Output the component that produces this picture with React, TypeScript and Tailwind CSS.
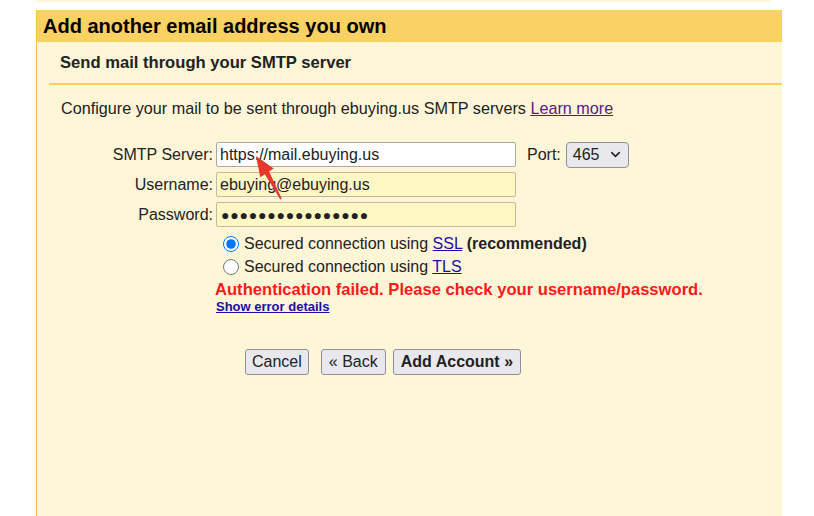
import { ChevronDown } from "lucide-react";

const FieldRow = ({
  label,
  children,
}: {
  label: string;
  children: React.ReactNode;
}) => (
  <div className="flex items-center h-[25px]">
    <label className="w-[179px] pr-[3px] text-right text-[16px] text-[#222]">
      {label}
    </label>
    {children}
  </div>
);

const App = () => {
  return (
    <div className="relative w-[814px] h-[516px] overflow-hidden bg-white font-['Liberation_Sans',Arial,sans-serif] text-[#222]">
      <div className="ml-[36px] w-[735px] h-[2px] bg-[#fff6d8]" />

      <div className="ml-[36px] mt-[8px] w-[746px] h-[506px] flex flex-col bg-[#fff6d8] border-l border-[#f6c347]">
        <div className="h-[32px] flex items-center pl-[6px] bg-[#fad163] text-[20px] font-bold text-black">
          Add another email address you own
        </div>

        <div className="ml-[12px] h-[43px] flex items-center pl-[11px] pt-[1px] border-b-2 border-[#f9cf5f] text-[16.6px] font-bold">
          Send mail through your SMTP server
        </div>

        <p className="mt-[14px] pl-[24px] text-[16.2px] leading-[18px]">
          Configure your mail to be sent through ebuying.us SMTP servers{" "}
          <a className="text-[#551a8b] underline">Learn more</a>
        </p>

        <div className="mt-[25px] flex flex-col gap-[5px]">
          <FieldRow label="SMTP Server:">
            <input
              defaultValue="https://mail.ebuying.us"
              className="w-[300px] h-[25px] px-[3px] bg-white border border-[#a9a9a9] rounded-[2px] text-[16px] text-[#222] outline-none"
            />
            <span className="ml-[11px] text-[16px]">Port:</span>
            <div className="ml-[5px] h-[26px] w-[63px] flex items-center justify-between pl-[6px] pr-[5px] bg-[#e9e9ed] border border-[#8f8f9d] rounded-[4px] text-[16px]">
              465
              <ChevronDown className="w-[15px] h-[15px]" strokeWidth={2.5} />
            </div>
          </FieldRow>
          <FieldRow label="Username:">
            <input
              defaultValue="ebuying@ebuying.us"
              className="w-[300px] h-[25px] px-[3px] bg-[#fff7c4] border border-[#c6b99b] rounded-[2px] text-[16px] text-[#222] outline-none"
            />
          </FieldRow>
          <FieldRow label="Password:">
            <input
              defaultValue="●●●●●●●●●●●●●●●●"
              className="w-[300px] h-[25px] px-[4px] bg-[#fff7c4] border border-[#c6b99b] rounded-[2px] text-[14px] tracking-[0.8px] text-[#222] outline-none"
            />
          </FieldRow>
        </div>

        <div className="mt-[5px] ml-[186px] flex flex-col text-[16px]">
          <label className="h-[23px] flex items-center gap-[5px]">
            <input
              type="radio"
              name="sec"
              defaultChecked
              className="m-0 w-[16px] h-[16px] accent-[#0075ff]"
            />
            <span>
              Secured connection using{" "}
              <a className="text-[#1a0dab] underline">SSL</a>{" "}
              <b>(recommended)</b>
            </span>
          </label>
          <label className="h-[23px] flex items-center gap-[5px]">
            <input type="radio" name="sec" className="m-0 w-[16px] h-[16px]" />
            <span>
              Secured connection using{" "}
              <a className="text-[#1a0dab] underline">TLS</a>
            </span>
          </label>
        </div>

        <div className="ml-[178px] mt-[1px] text-[16.6px] font-bold text-[#ff1a1a] leading-[22px]">
          Authentication failed. Please check your username/password.
        </div>
        <a className="ml-[179px] -mt-[2px] text-[13px] font-bold text-[#1a0dab] underline leading-[15px] w-fit">
          Show error details
        </a>

        <div className="mt-[35px] ml-[208px] flex items-center text-[16px]">
          <button className="h-[26px] px-[6px] bg-[#e9e9ed] border border-[#8f8f9d] rounded-[3px]">
            Cancel
          </button>
          <button className="ml-[12px] h-[26px] px-[7px] bg-[#e9e9ed] border border-[#8f8f9d] rounded-[3px]">
            « Back
          </button>
          <button className="ml-[7px] h-[26px] px-[7px] bg-[#e9e9ed] border border-[#8f8f9d] rounded-[3px] font-bold">
            Add Account »
          </button>
        </div>
      </div>

      <svg
        className="absolute left-0 top-0 pointer-events-none"
        width="814"
        height="516"
      >
        <polygon
          points="256,156 273.7,168.4 269.1,171.4 281.7,198.6 280.3,199.4 264.9,174.2 260.3,177.2"
          fill="#e8382c"
        />
      </svg>
    </div>
  );
};

export default App;
